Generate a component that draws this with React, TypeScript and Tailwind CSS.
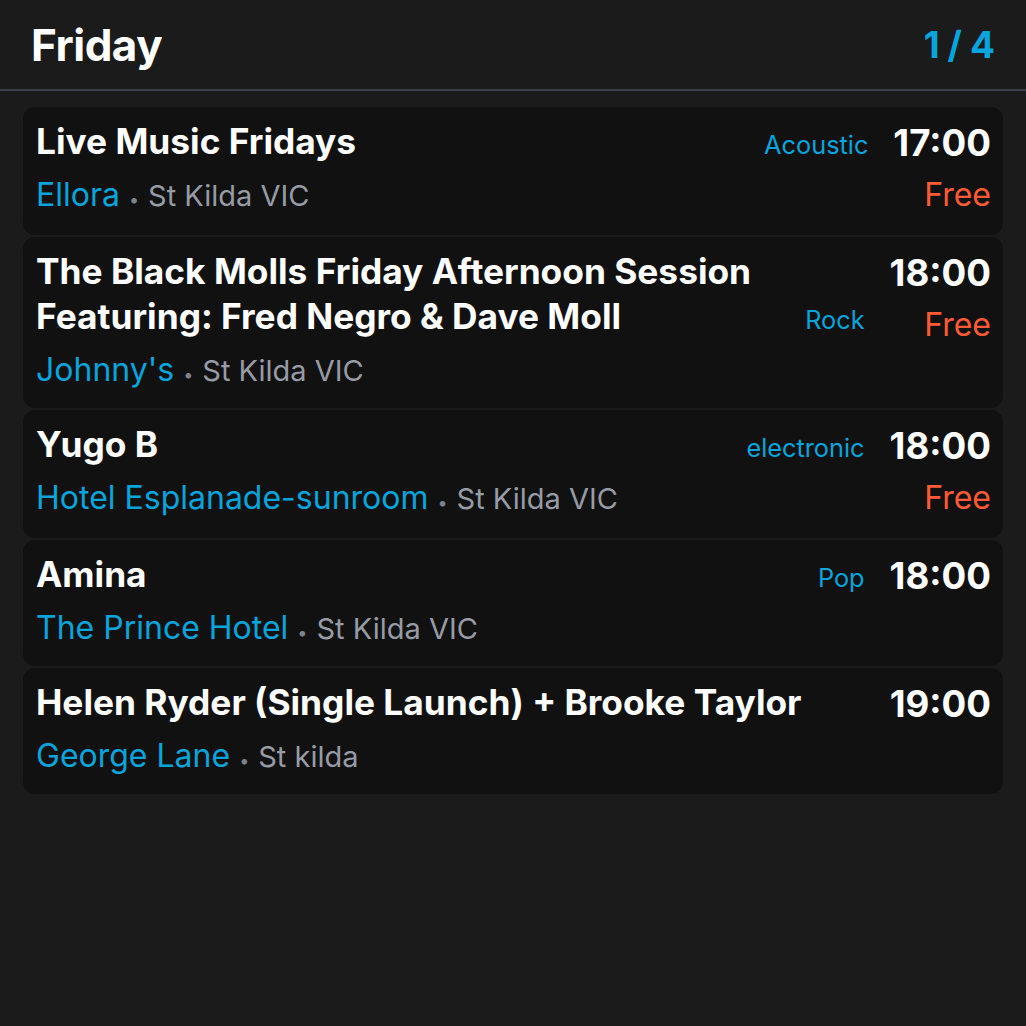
import React from "react";

type Ev = { title: string; venue: string; loc: string; genre?: string; time: string; free?: boolean };

const events: Ev[] = [
  { title: "Live Music Fridays", venue: "Ellora", loc: "St Kilda VIC", genre: "Acoustic", time: "17:00", free: true },
  { title: "The Black Molls Friday Afternoon Session Featuring: Fred Negro & Dave Moll", venue: "Johnny's", loc: "St Kilda VIC", genre: "Rock", time: "18:00", free: true },
  { title: "Yugo B", venue: "Hotel Esplanade-sunroom", loc: "St Kilda VIC", genre: "electronic", time: "18:00", free: true },
  { title: "Amina", venue: "The Prince Hotel", loc: "St Kilda VIC", genre: "Pop", time: "18:00" },
  { title: "Helen Ryder (Single Launch) + Brooke Taylor", venue: "George Lane", loc: "St kilda", time: "19:00" },
];

export default function App() {
  return (
    <div className="min-h-[1026px] w-full bg-[#1b1b1b] text-white" style={{ fontFamily: "Inter, 'Noto Sans', sans-serif" }}>
      <div className="flex h-[89px] items-center justify-between pl-[31px] pr-[31px]">
        <div className="text-[44px] font-bold leading-[44px] tracking-[-0.5px]">Friday</div>
        <div className="mr-[-8px] text-[37px] font-bold leading-[37px] tracking-[8px] text-[#07a5dc]">1/4</div>
      </div>
      <div className="h-[2px] bg-[#3a404c]" />
      <div className="flex flex-col gap-[2px] px-[23px] pt-[16px]">
        {events.map((e, i) => (
          <div key={i} className="flex items-start rounded-[12px] bg-[#111111] pl-[13px] pr-[12px] pt-[12px] pb-[18px]">
            <div className="flex min-w-0 flex-1 flex-col">
              <div className="flex items-end">
                <div className="flex-1 text-[35.3px] font-bold leading-[45px]">{e.title}</div>
                {e.genre && (
                  <div className="ml-[16px] text-[25.3px] leading-[38px] text-[#07a5dc]">{e.genre}</div>
                )}
              </div>
              <div className="mt-[11px] h-[40px] whitespace-nowrap text-[32px] leading-[40px]">
                <span className="text-[#07a5dc]">{e.venue}</span>
                <span className="mx-[9px] align-baseline text-[18px] leading-none text-[#7d828c]">•</span>
                <span className="text-[29px] leading-none text-[#979ba5]">{e.loc}</span>
              </div>
            </div>
            <div className="ml-[25px] flex flex-col items-end">
              <div className="text-[36.7px] font-bold leading-[48px]">{e.time}</div>
              {e.free && <div className="mt-[6px] text-[32px] leading-[44px] text-[#ff5a36]">Free</div>}
            </div>
          </div>
        ))}
      </div>
    </div>
  );
}
